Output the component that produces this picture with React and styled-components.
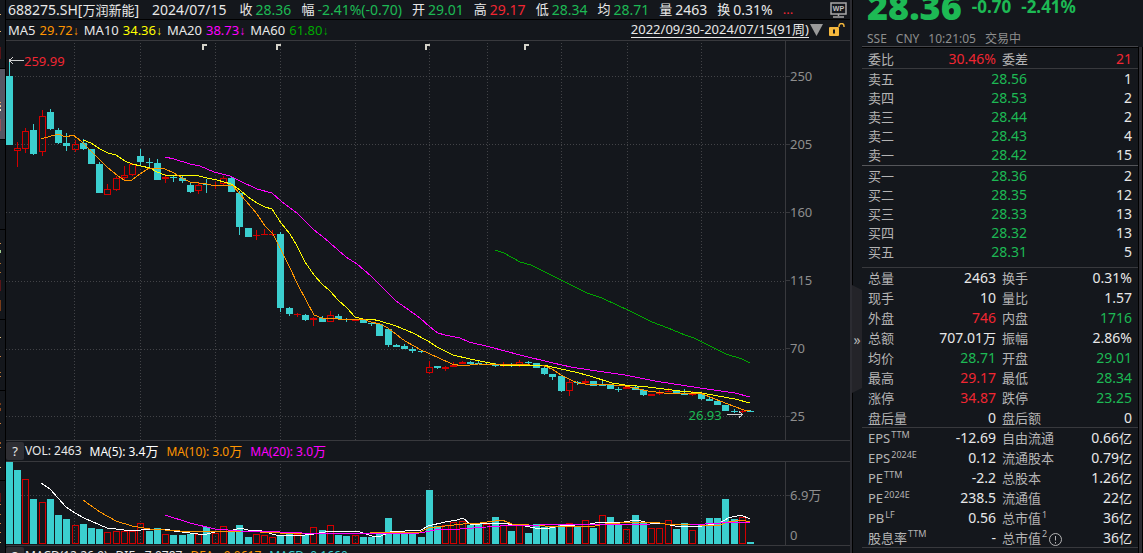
import styled, { createGlobalStyle } from 'styled-components'

const colors = {
  background: '#14171c',
  line: '#38393d',
  text: '#e8e8e8',
  label: '#b4b4b4',
  muted: '#8e8e8e',
  up: '#f02632',
  down: '#1db954',
  candleUp: '#d20000',
  candleDown: '#3bcfcf',
  orange: '#ff9500',
  yellow: '#ffff00',
  magenta: '#ff00ff',
  green: '#00a800',
  white: '#ffffff',
}

const GlobalStyle = createGlobalStyle`
  * {
    box-sizing: border-box;
  }
  body {
    margin: 0;
    overflow: hidden;
    background-color: ${colors.background};
    color: ${colors.text};
    font-family: "Noto Sans", "Noto Sans CJK SC", sans-serif;
    font-size: 14px;
  }
`

const Page = styled.div`
  display: grid;
  grid-template-columns: 6px minmax(0, 1fr) 293px;
  grid-template-rows: minmax(0, 1fr);
  height: 100vh;
  overflow: hidden;
  white-space: nowrap;
`

const Rail = styled.aside`
  border-right: 1px solid #000000;
`

const RailDrawing = styled.svg`
  display: block;
`

const ChartPanel = styled.main`
  display: flex;
  flex-direction: column;
  min-width: 0;
`

const QuoteBar = styled.header`
  display: flex;
  align-items: center;
  flex: none;
  gap: 10px;
  height: 20px;
  padding: 0 3px 0 2px;
  border-bottom: 1px solid #000000;
`

const Code = styled.h1`
  margin: 0 3px 0 0;
  font-size: 14px;
  font-weight: 400;
  line-height: 19px;
`

const Han = styled.span`
  font-size: 13px;
`

const DateText = styled.time`
  margin-right: 3px;
  line-height: 19px;
`

const Quote = styled.span`
  display: flex;
  align-items: center;
  gap: 3px;
  line-height: 19px;
  color: ${({ $color }) => $color || colors.text};
`

const QuoteLabel = styled.span`
  font-size: 13px;
  color: ${colors.text};
`

const IconButton = styled.button`
  display: flex;
  padding: 0;
  border: 0;
  background: none;
  cursor: pointer;
  margin-left: ${({ $push }) => ($push ? 'auto' : '0')};
`

const MoreButton = styled(IconButton)`
  color: ${colors.up};
  font-family: inherit;
  font-size: 13px;
  line-height: 19px;
`

const IndicatorBar = styled.div`
  display: flex;
  align-items: center;
  flex: none;
  gap: ${({ $sub }) => ($sub ? '8px' : '5px')};
  height: 21px;
  padding-left: ${({ $sub }) => ($sub ? '0' : '2px')};
  padding-right: 5px;
  border-bottom: 1px solid ${colors.line};
  font-size: ${({ $sub }) => ($sub ? '12px' : '13px')};
  line-height: 20px;
`

const Indicator = styled.span`
  color: ${({ $color }) => $color || colors.text};
`

const IndicatorName = styled.span`
  margin-right: 4px;
  color: ${colors.text};
`

const Arrow = styled.span`
  font-family: "Liberation Sans", sans-serif;
  font-size: 12px;
`

const RangeLink = styled.a`
  margin-left: auto;
  border-bottom: 1px solid ${colors.text};
  color: ${colors.text};
  line-height: 15px;
  text-decoration: none;
`

const RangeTools = styled.span`
  display: flex;
  align-items: center;
  gap: 6px;
  margin-left: -4px;
`

const HelpButton = styled.button`
  width: 18px;
  height: 18px;
  margin-right: -7px;
  padding: 0;
  border: 0;
  border-radius: 2px;
  background-color: #2e2e33;
  color: ${colors.text};
  font-family: inherit;
  font-size: 13px;
  line-height: 18px;
`

const Plot = styled.section`
  display: grid;
  grid-template-columns: minmax(0, 1fr) 65px;
  flex: none;
  height: ${({ $height }) => $height};
  border-bottom: 1px solid ${colors.line};
`

const Canvas = styled.div`
  position: relative;
`

const Drawing = styled.svg`
  display: block;
  width: 100%;
  height: 100%;
  shape-rendering: crispEdges;
`

const Extreme = styled.span`
  position: absolute;
  left: ${({ $left }) => $left};
  top: ${({ $top }) => $top};
  color: ${({ $color }) => $color};
  font-size: 13px;
  line-height: 18px;
`

const Axis = styled.div`
  display: flex;
  flex-direction: column;
  gap: ${({ $gap }) => $gap};
  padding-top: ${({ $top }) => $top};
  padding-left: 4px;
  border-left: 1px solid ${colors.line};
  color: ${colors.muted};
  font-size: 13px;
`

const AxisLabel = styled.span`
  position: relative;
  line-height: 20px;
  &::before {
    content: '';
    position: absolute;
    left: -4px;
    top: 10px;
    width: 4px;
    height: ${({ $plain }) => ($plain ? '0' : '1px')};
    background-color: ${colors.line};
  }
`

const SidePanel = styled.aside`
  display: grid;
  grid-template-columns: 12px minmax(0, 1fr) 5px;
  grid-template-rows: minmax(0, 1fr);
`

const Splitter = styled.div`
  display: flex;
  align-items: center;
  padding-top: 125px;
  border-left: 2px solid #2c2c32;
  box-shadow: inset 1px 0 0 #000000;
`

const CollapseButton = styled.button`
  width: 10px;
  height: 108px;
  padding: 0;
  border: 0;
  background-color: #242429;
  clip-path: polygon(0 0, 100% 5px, 100% 103px, 0 100%);
  color: ${colors.label};
  font-family: inherit;
  font-size: 14px;
`

const Gutter = styled.div`
  margin-top: 47px;
  border-left: 1px solid #000000;
  border-right: 1px solid #000000;
  background-color: #2c2c32;
`

const SideContent = styled.div`
  min-width: 0;
`

const PriceHeader = styled.div`
  display: flex;
  flex-direction: column;
  justify-content: flex-end;
  gap: 7px;
  height: 47px;
  margin-bottom: 3px;
  padding-left: 5px;
  border-bottom: 1px solid #44454a;
  box-shadow: 0 1px 0 #000000;
`

const PriceLine = styled.div`
  display: flex;
  align-items: flex-start;
  gap: 10px;
  color: ${colors.down};
  font-weight: 700;
  line-height: 36px;
`

const LastPrice = styled.strong`
  font-size: 36px;
`

const Change = styled.span`
  font-size: 17px;
`

const Status = styled.div`
  display: flex;
  gap: 9px;
  color: ${colors.muted};
  font-size: 12px;
  line-height: 14px;
`

const Table = styled.table`
  width: 100%;
  table-layout: fixed;
  border-collapse: separate;
  border-spacing: 0;
`

const Row = styled.tr`
  height: ${({ $height }) => $height || '20px'};
  & > * {
    border-bottom: ${({ $line }) => ($line ? `1px solid ${$line}` : '0')};
  }
`

const LabelCell = styled.th`
  padding: 0 0 0 ${({ $pad }) => $pad || '6px'};
  color: ${colors.label};
  font-size: 13px;
  font-weight: 400;
  line-height: 18px;
  text-align: left;
`

const ValueCell = styled.td`
  padding: 0 ${({ $pad }) => $pad || '6px'} 0 0;
  color: ${({ $color }) => $color || colors.text};
  line-height: 18px;
  text-align: right;
`

const LabelCol = styled.col`
  width: ${({ $width }) => $width};
`

const Book = styled.div`
  padding-bottom: ${({ $last }) => ($last ? '6px' : '1px')};
  border-bottom: 1px solid ${({ $last }) => ($last ? colors.line : '#55565a')};
`

const Sup = styled.sup`
  margin-left: 1px;
  font-size: 9px;
  line-height: 0;
`

const InfoIcon = styled.svg`
  margin-left: 2px;
  vertical-align: -3px;
`

// [open/close top, bottom, high, low, rising]
const candles = [
  [76, 145, 60, 145, 0], [148, 151, 142, 167, 1], [131, 149, 128, 153, 1], [130, 154, 124, 155, 0],
  [116, 152, 110, 156, 1], [112, 129, 109, 130, 0], [130, 143, 128, 144, 0], [143, 146, 133, 151, 0],
  [144, 150, 140, 152, 1], [143, 149, 139, 150, 0], [149, 164, 149, 164, 0], [164, 193, 162, 193, 0],
  [189, 195, 184, 195, 1], [178, 190, 176, 191, 1], [175, 178, 166, 180, 1], [164, 175, 163, 176, 1],
  [156, 162, 149, 165, 0], [162, 163, 158, 167, 0], [163, 180, 159, 180, 0], [177, 179, 174, 183, 1],
  [177, 178, 176, 182, 0], [178, 181, 176, 183, 0], [185, 192, 182, 193, 0], [185, 191, 183, 194, 1],
  [184, 185, 179, 193, 0], [185, 186, 182, 189, 1], [178, 184, 176, 185, 1], [178, 192, 176, 192, 0],
  [193, 227, 191, 235, 0], [228, 237, 228, 237, 0], [235, 236, 230, 240, 1], [234, 235, 229, 235, 1],
  [234, 235, 230, 236, 1], [234, 308, 232, 312, 0], [308, 314, 307, 316, 0], [314, 315, 313, 317, 1],
  [315, 320, 314, 321, 0], [318, 320, 317, 326, 1], [318, 322, 316, 322, 0], [315, 322, 311, 322, 1],
  [316, 319, 314, 319, 0], [319, 320, 318, 322, 0], [320, 321, 319, 321, 1], [320, 323, 319, 323, 0],
  [323, 324, 322, 326, 0], [324, 336, 323, 336, 0], [329, 345, 328, 347, 0], [345, 347, 344, 347, 0],
  [346, 349, 344, 349, 0], [349, 351, 347, 353, 0], [351, 352, 350, 353, 0], [367, 373, 361, 374, 1],
  [366, 368, 366, 369, 0], [367, 369, 366, 371, 1], [365, 367, 362, 367, 1], [362, 364, 361, 364, 1],
  [362, 364, 361, 365, 0], [363, 364, 361, 364, 0], [364, 365, 363, 365, 0], [364, 366, 363, 367, 0],
  [364, 365, 362, 367, 1], [365, 366, 363, 367, 0], [362, 365, 360, 367, 1], [362, 363, 361, 364, 0],
  [363, 368, 363, 368, 0], [368, 374, 366, 375, 0], [374, 377, 374, 380, 0], [376, 391, 376, 392, 0],
  [382, 391, 380, 396, 1], [382, 383, 381, 385, 0], [381, 383, 379, 384, 1], [381, 386, 381, 386, 0],
  [385, 386, 381, 386, 0], [384, 389, 384, 389, 0], [389, 390, 387, 392, 0], [387, 389, 386, 389, 1],
  [387, 390, 385, 390, 0], [390, 395, 389, 396, 0], [394, 396, 394, 396, 1], [393, 394, 390, 395, 1],
  [391, 392, 388, 392, 1], [391, 393, 391, 393, 0], [393, 395, 389, 395, 0], [394, 395, 391, 396, 1],
  [394, 399, 394, 400, 0], [399, 401, 397, 401, 0], [401, 405, 401, 405, 0], [405, 411, 405, 411, 0],
  [411, 412, 409, 413, 0], [411, 412, 409, 413, 1], [411, 412, 410, 412, 0],
]

const volumeTops = [
  462, 470, 479, 499, 502, 499, 515, 519, 525, 524, 528, 529, 532, 531, 531, 531, 523, 531, 528, 534,
  535, 535, 534, 534, 527, 533, 526, 531, 525, 537, 534, 535, 537, 535, 533, 534, 535, 527, 530, 525,
  535, 536, 535, 537, 537, 534, 518, 533, 533, 533, 537, 490, 526, 525, 522, 521, 525, 523, 524, 517,
  525, 531, 525, 533, 524, 527, 526, 525, 523, 526, 520, 528, 515, 517, 525, 529, 515, 523, 528, 528,
  520, 529, 523, 530, 525, 518, 518, 499, 519, 517, 542,
]
const risingVolumes = [
  2, 4, 8, 12, 13, 14, 15, 16, 19, 23, 25, 26, 30, 31, 32, 35, 37, 39, 42, 53, 54, 55, 58, 60, 62, 68,
  70, 72, 75, 78, 79, 80, 83, 89,
]

const priceLines = [
  {
    color: colors.magenta,
    points: '165,157 174,159 190,164 200,166 214,172 230,176 240,181 257,189 272,193 281,201 298,214 314,230 322,236 338,250 346,257 357,264 371,276 387,292 396,301 406,308 420,318 430,327 438,333 445,335 460,338 469,342 490,347 520,355 553,363 571,367 590,370 625,375 655,381 700,388 735,393 750,397',
  },
  {
    color: colors.yellow,
    points: '83,140 91,143 100,149 108,153 116,155 125,161 132,164 150,168 157,172 165,175 195,175 207,178 217,180 231,184 240,190 248,197 257,203 265,207 272,209 281,223 290,234 297,246 305,262 314,275 322,284 330,291 338,300 347,308 355,317 363,319 371,319 380,321 396,326 413,333 428,341 437,347 453,355 470,359 500,365 543,365 552,367 575,372 590,376 612,383 625,385 648,387 680,391 702,393 718,396 735,399 750,403',
  },
  {
    color: colors.orange,
    points: '41,139 58,134 66,137 73,135 81,141 91,151 107,167 118,176 124,180 132,180 140,174 149,168 165,169 174,173 182,178 190,182 207,184 215,186 232,185 240,194 257,214 265,226 273,234 281,250 290,268 298,285 306,300 314,315 322,318 338,319 363,319 371,322 380,324 388,328 397,335 405,341 414,346 421,350 428,353 452,364 463,366 478,364 530,365 542,365 552,369 561,375 571,380 578,383 592,385 602,384 625,386 648,391 664,393 700,393 715,399 733,406 744,410 750,411',
  },
  {
    color: colors.green,
    points: '495,250 504,253 520,262 531,265 561,280 587,293 602,298 619,306 628,310 652,322 668,328 685,335 694,338 726,354 742,359 750,363',
  },
]

const volumeLines = [
  {
    color: colors.white,
    points: '41,483 50,489 58,498 66,507 75,513 84,518 100,525 107,528 124,530 132,531 150,529 165,529 174,531 190,533 198,534 207,534 215,532 230,531 240,528 248,530 262,531 272,534 280,536 305,535 314,534 325,532 345,531 360,532 372,536 381,536 390,532 421,530 428,526 445,522 457,520 463,518 470,524 480,524 490,523 505,523 512,525 525,526 535,528 550,528 560,526 590,524 600,522 624,522 636,520 650,523 665,524 675,526 702,526 720,523 728,518 741,515 750,519',
  },
  {
    color: colors.orange,
    points: '83,500 100,512 116,521 132,526 150,529 180,531 240,531 280,533 300,534 345,533 370,533 380,532 395,532 420,532 428,528 445,526 463,524 480,523 502,520 512,524 545,526 560,526 595,526 605,524 636,522 655,522 665,524 700,525 720,525 728,522 742,520 750,522',
  },
  {
    color: colors.magenta,
    points: '165,515 190,523 215,529 240,531 280,532 302,533 366,533 380,534 420,533 435,530 460,529 500,526 540,525 570,524 600,524 650,525 690,525 720,523 750,522',
  },
]

const columns = [74, 140, 215, 280, 355, 429, 487, 561, 627, 701]
const barX = (index) => Math.floor(6.1 + index * 8.238)

const quotes = [
  { label: '收', value: '28.36', color: colors.down },
  { label: '幅', value: '-2.41%(-0.70)', color: colors.down },
  { label: '开', value: '29.01', color: colors.down },
  { label: '高', value: '29.17', color: colors.up },
  { label: '低', value: '28.34', color: colors.down },
  { label: '均', value: '28.71', color: colors.down },
  { label: '量', value: '2463' },
  { label: '换', value: '0.31%' },
]

const averages = [
  { name: 'MA5', value: '29.72', color: colors.orange },
  { name: 'MA10', value: '34.36', color: colors.yellow },
  { name: 'MA20', value: '38.73', color: colors.magenta },
  { name: 'MA60', value: '61.80', color: colors.green },
]

const asks = [
  ['卖五', '28.56', '1'],
  ['卖四', '28.53', '2'],
  ['卖三', '28.44', '2'],
  ['卖二', '28.43', '4'],
  ['卖一', '28.42', '15'],
]

const bids = [
  ['买一', '28.36', '2'],
  ['买二', '28.35', '12'],
  ['买三', '28.33', '13'],
  ['买四', '28.32', '13'],
  ['买五', '28.31', '5'],
]

const stats = [
  [{ label: '总量', value: '2463' }, { label: '换手', value: '0.31%' }],
  [{ label: '现手', value: '10' }, { label: '量比', value: '1.57' }],
  [{ label: '外盘', value: '746', color: colors.up }, { label: '内盘', value: '1716', color: colors.down }],
  [{ label: '总额', value: '707.01', unit: '万' }, { label: '振幅', value: '2.86%' }],
  [{ label: '均价', value: '28.71', color: colors.down }, { label: '开盘', value: '29.01', color: colors.down }],
  [{ label: '最高', value: '29.17', color: colors.up }, { label: '最低', value: '28.34', color: colors.down }],
  [{ label: '涨停', value: '34.87', color: colors.up }, { label: '跌停', value: '23.25', color: colors.down }],
  [{ label: '盘后量', value: '0' }, { label: '盘后额', value: '0' }],
  [{ label: 'EPS', sup: 'TTM', value: '-12.69' }, { label: '自由流通', value: '0.66', unit: '亿' }],
  [{ label: 'EPS', sup: '2024E', value: '0.12' }, { label: '流通股本', value: '0.79', unit: '亿' }],
  [{ label: 'PE', sup: 'TTM', value: '-2.2' }, { label: '总股本', value: '1.26', unit: '亿' }],
  [{ label: 'PE', sup: '2024E', value: '238.5' }, { label: '流通值', value: '22', unit: '亿' }],
  [{ label: 'PB', sup: 'LF', value: '0.56' }, { label: '总市值', sup: '1', value: '36', unit: '亿' }],
  [{ label: '股息率', sup: 'TTM', value: '-' }, { label: '总市值', sup: '2', info: true, value: '36', unit: '亿' }],
]

const railMarks = [
  [14, 1, '#e0b070'], [31, 1, '#e0b070'], [47, 12, '#5a1518'], [102, 1, '#e8a060'], [105, 2, '#f0c890'],
  [109, 2, '#fff0d0'], [119, 12, '#95505a'], [243, 1, '#d09050'], [250, 3, '#a0d090'], [263, 1, '#b07030'],
  [272, 1, '#b07030'], [280, 11, '#5a1518'], [300, 11, '#7a3c18'], [337, 1, '#e0c080'], [356, 1, '#d08040'],
  [372, 1, '#b07030'], [376, 1, '#d08040'], [403, 2, '#7a3c18'], [408, 3, '#8a4820'], [423, 1, '#d08040'],
  [442, 2, '#a05a28'], [447, 1, '#d08040'], [467, 1, '#e0c080'], [493, 9, '#5a1518'], [504, 1, '#d08040'],
  [514, 1, '#b07030'], [523, 1, '#d08040'], [532, 1, '#d08040'], [542, 1, '#e0c080'],
]

function Lines({ lines }) {
  return lines.map(({ color, points }) => (
    <polyline key={color} points={points} fill='none' stroke={color} vectorEffect='non-scaling-stroke' />
  ))
}

function Grid({ rows, top, bottom }) {
  return (
    <g stroke='#424347' strokeDasharray='1 2'>
      {columns.map((x) => (
        <line key={x} x1={x + 0.5} x2={x + 0.5} y1={top} y2={bottom} />
      ))}
      {rows.map((y) => (
        <line key={y} x1='6' x2='785' y1={y + 0.5} y2={y + 0.5} />
      ))}
    </g>
  )
}

function Candle({ index, data }) {
  const [top, bottom, high, low, rising] = data
  const x = barX(index)
  const color = rising ? colors.candleUp : colors.candleDown
  const hollow = rising && bottom - top > 2

  return (
    <g fill={color}>
      <rect x={x + 3} y={high} width='1' height={top - high} />
      <rect x={x + 3} y={bottom} width='1' height={low - bottom} />
      {hollow ? (
        <rect x={x + 0.5} y={top + 0.5} width='6' height={bottom - top - 1} fill='none' stroke={color} />
      ) : (
        <rect x={x} y={top} width='7' height={bottom - top} />
      )}
    </g>
  )
}

function VolumeBar({ index, top }) {
  const x = barX(index)
  return risingVolumes.includes(index) ? (
    <rect x={x + 0.5} y={top + 0.5} width='6' height={543 - top} fill='none' stroke={colors.candleUp} />
  ) : (
    <rect x={x} y={top} width='7' height={544 - top} fill={colors.candleDown} />
  )
}

function PriceChart() {
  return (
    <Plot $height='400px'>
      <Canvas>
        <Drawing viewBox='6 41 779 399' preserveAspectRatio='none'>
          <Grid rows={[76, 144, 212, 281, 349, 416]} top={43} bottom={440} />
          {candles.map((data, index) => (
            <Candle key={index} index={index} data={data} />
          ))}
          <Lines lines={priceLines} />
          {[202, 276, 425, 524].map((x) => (
            <path key={x} d={`M${x} 44h5v2h-3v4h-2z`} fill='#d4d2c8' />
          ))}
          <path d='M9 60.5H24M9 60.5l4 -3M9 60.5l4 3' fill='none' stroke='#d0d0d0' />
          <path d='M727 414.5H743M743 414.5l-4 -3M743 414.5l-4 3' fill='none' stroke='#d0d0d0' />
        </Drawing>
        <Extreme $left='18px' $top='11px' $color={colors.up}>259.99</Extreme>
        <Extreme $left='calc(88% - 3px)' $top='365px' $color={colors.down}>26.93</Extreme>
      </Canvas>
      <Axis $gap='48px' $top='25px'>
        {['250', '205', '160', '115', '70', '25'].map((label) => (
          <AxisLabel key={label}>{label}</AxisLabel>
        ))}
      </Axis>
    </Plot>
  )
}

function VolumeChart() {
  return (
    <Plot $height='84px'>
      <Canvas>
        <Drawing viewBox='6 462 779 83' preserveAspectRatio='none'>
          <Grid rows={[495]} top={464} bottom={545} />
          {volumeTops.map((top, index) => (
            <VolumeBar key={index} index={index} top={top} />
          ))}
          <Lines lines={volumeLines} />
        </Drawing>
      </Canvas>
      <Axis $gap='20px' $top='23px'>
        <AxisLabel>6.9<Han>万</Han></AxisLabel>
        <AxisLabel $plain>0</AxisLabel>
      </Axis>
    </Plot>
  )
}

function BookRows({ rows }) {
  return (
    <Table>
      <colgroup>
        <LabelCol $width='60px' />
        <LabelCol $width='105px' />
        <col />
      </colgroup>
      <tbody>
        {rows.map(([label, price, amount]) => (
          <Row key={label} $height='19px'>
            <LabelCell scope='row'>{label}</LabelCell>
            <ValueCell $pad='0px' $color={colors.down}>{price}</ValueCell>
            <ValueCell>{amount}</ValueCell>
          </Row>
        ))}
      </tbody>
    </Table>
  )
}

function PairRow({ cells, line, height }) {
  return (
    <Row $line={line} $height={height}>
      {cells.map(({ label, sup, info, value, unit, color }, index) => [
        <LabelCell key={`label-${label}`} scope='row' $pad={index ? '0px' : '6px'}>
          {label}
          {sup && <Sup>{sup}</Sup>}
          {info && (
            <InfoIcon width='13' height='13' viewBox='0 0 13 13' fill='none' stroke={colors.label}>
              <circle cx='6.5' cy='6.5' r='6' />
              <path d='M6.5 3v4.5M6.5 9v1.5' />
            </InfoIcon>
          )}
        </LabelCell>,
        <ValueCell key={`value-${label}`} $color={color}>
          {value}
          {unit && <Han>{unit}</Han>}
        </ValueCell>,
      ])}
    </Row>
  )
}

function PairColumns() {
  return (
    <colgroup>
      <LabelCol $width='66px' />
      <LabelCol $width='74px' />
      <LabelCol $width='76px' />
      <col />
    </colgroup>
  )
}

function Sidebar() {
  return (
    <SidePanel>
      <Splitter>
        <CollapseButton aria-label='收起'>»</CollapseButton>
      </Splitter>
      <SideContent>
        <PriceHeader>
          <PriceLine>
            <LastPrice>28.36</LastPrice>
            <Change>-0.70</Change>
            <Change>-2.41%</Change>
          </PriceLine>
          <Status>
            <span>SSE</span>
            <span>CNY</span>
            <span>10:21:05</span>
            <span>交易中</span>
          </Status>
        </PriceHeader>
        <Table>
          <PairColumns />
          <tbody>
            <PairRow
              height='18px'
              line={colors.line}
              cells={[
                { label: '委比', value: '30.46%', color: colors.up },
                { label: '委差', value: '21', color: colors.up },
              ]}
            />
          </tbody>
        </Table>
        <Book>
          <BookRows rows={asks} />
        </Book>
        <Book $last>
          <BookRows rows={bids} />
        </Book>
        <Table>
          <PairColumns />
          <tbody>
            {stats.map((cells, index) => (
              <PairRow
                key={cells[0].label + cells[0].sup}
                cells={cells}
                line={index === 7 || index === 13 ? colors.line : undefined}
              />
            ))}
          </tbody>
        </Table>
      </SideContent>
      <Gutter />
    </SidePanel>
  )
}

function App() {
  return (
    <Page>
      <GlobalStyle />
      <Rail>
        <RailDrawing width='5' height='553' shapeRendering='crispEdges'>
          <rect y='69' width='5' height='70' fill='#565663' />
          {[68, 139, 229, 319, 390, 480].map((y) => (
            <rect key={y} y={y} width='5' height='1' fill='#000000' />
          ))}
          {railMarks.map(([y, height, fill]) => (
            <rect key={y} y={y} width='1' height={height} fill={fill} />
          ))}
        </RailDrawing>
      </Rail>
      <ChartPanel>
        <QuoteBar>
          <Code>688275.SH[<Han>万润新能</Han>]</Code>
          <DateText>2024/07/15</DateText>
          {quotes.map(({ label, value, color }) => (
            <Quote key={label} $color={color}>
              <QuoteLabel>{label}</QuoteLabel>
              {value}
            </Quote>
          ))}
          <MoreButton aria-label='更多'>...</MoreButton>
          <IconButton $push aria-label='WP'>
            <svg width='17' height='16' viewBox='0 0 17 16' fill='none' stroke='#a8a8a8'>
              <rect x='1' y='1' width='15' height='11' strokeWidth='1.5' />
              <path d='M8.5 12v2M3 15h11' strokeWidth='1.5' />
              <text x='8.5' y='9' fill='#c0c0c0' stroke='none' fontSize='7' fontWeight='700' textAnchor='middle'>WP</text>
            </svg>
          </IconButton>
        </QuoteBar>
        <IndicatorBar>
          {averages.map(({ name, value, color }) => (
            <Indicator key={name} $color={color}>
              <IndicatorName>{name}</IndicatorName>
              {value}
              <Arrow>↓</Arrow>
            </Indicator>
          ))}
          <RangeLink href='#range'>2022/09/30-2024/07/15(91周)</RangeLink>
          <RangeTools>
            <IconButton aria-label='选择区间'>
              <svg width='13' height='12' viewBox='0 0 13 12'>
                <path d='M0 0h13L6.5 12z' fill='#9a9a9a' />
              </svg>
            </IconButton>
            <IconButton aria-label='解锁'>
              <svg width='16' height='14' viewBox='0 0 16 14'>
                <rect y='4' width='10' height='9' rx='1' fill='#f5b83d' />
                <path d='M10 4V3a2.5 2.5 0 0 1 5 0v1' fill='none' stroke='#f5b83d' strokeWidth='1.4' />
                <path d='M4 6.5h2v4H4z' fill='#14171c' />
              </svg>
            </IconButton>
          </RangeTools>
        </IndicatorBar>
        <PriceChart />
        <IndicatorBar $sub>
          <HelpButton>?</HelpButton>
          <Indicator>VOL: 2463</Indicator>
          <Indicator $color={colors.white}>MA(5): 3.4<Han>万</Han></Indicator>
          <Indicator $color={colors.orange}>MA(10): 3.0<Han>万</Han></Indicator>
          <Indicator $color={colors.magenta}>MA(20): 3.0<Han>万</Han></Indicator>
        </IndicatorBar>
        <VolumeChart />
        <IndicatorBar $sub>
          <HelpButton>?</HelpButton>
          <Indicator>MACD(12,26,9)</Indicator>
          <Indicator>DIF: -7.0787</Indicator>
          <Indicator $color={colors.orange}>DEA: -9.0617</Indicator>
          <Indicator $color={colors.candleDown}>MACD: 0.1660</Indicator>
        </IndicatorBar>
      </ChartPanel>
      <Sidebar />
    </Page>
  )
}

export default App
